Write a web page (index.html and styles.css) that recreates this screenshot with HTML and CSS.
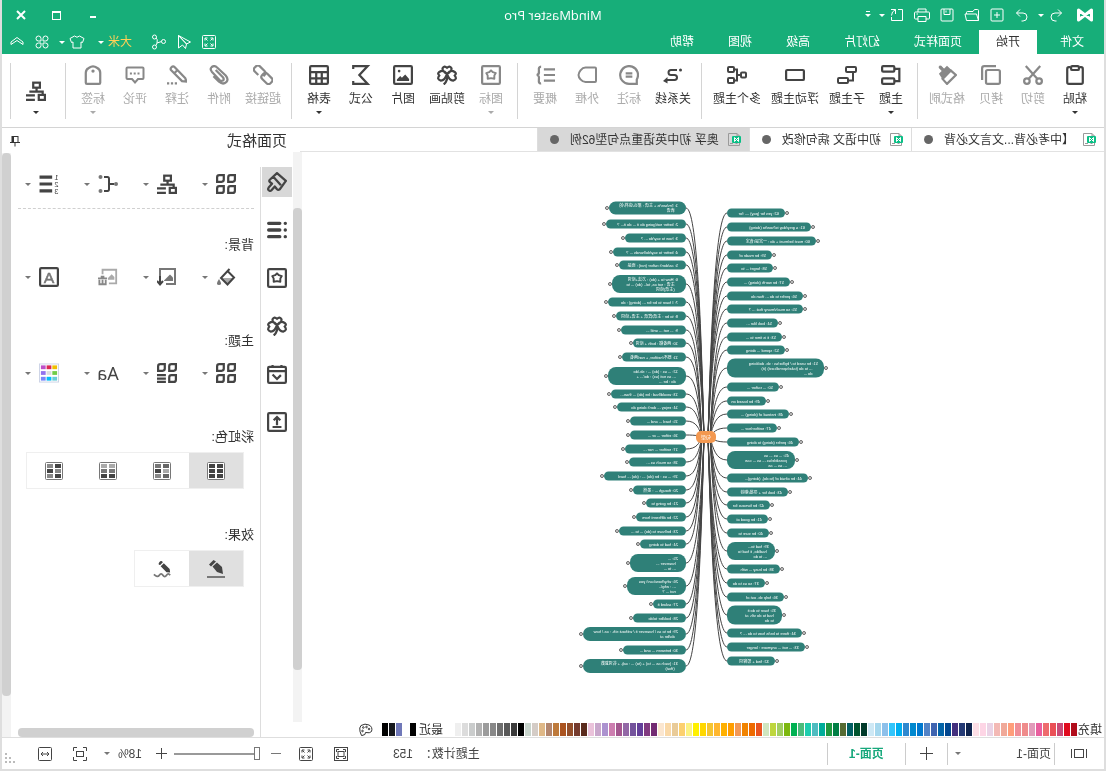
FILE: index.html
```html
<!DOCTYPE html>
<html lang="zh-CN">
<head>
<meta charset="utf-8">
<title>MindMaster Pro</title>
<link rel="stylesheet" href="styles.css">
</head>
<body>
<svg class="sprite" aria-hidden="true">
  <defs>
    <symbol id="logo" viewBox="0 0 18 16"><path stroke-width="3" stroke-linejoin="round" d="M2.500 13V3L15.500 13V3z"/></symbol>
    <symbol id="undo" viewBox="0 0 14 14"><path d="M5 1.500 1.500 5 5 8.500M1.500 5H8a4 4 0 0 1 0 8H6.500"/></symbol>
    <symbol id="redo" viewBox="0 0 14 14"><path d="m9 1.500 3.500 3.500L9 8.500M12.500 5H6a4 4 0 0 0 0 8h1.500"/></symbol>
    <symbol id="newdoc" viewBox="0 0 14 14"><rect x="1" y="1" width="12" height="12" rx="1"/><path d="M7 4v6M4 7h6"/></symbol>
    <symbol id="folder" viewBox="0 0 16 14"><path d="M1.500 12.500V2.500q0-1 1-1h3l1.500 2h5.500q1 0 1 1V6M1.500 12.500l2-6.500h11.500l-1.500 6.500z"/></symbol>
    <symbol id="save" viewBox="0 0 14 14"><rect x="1" y="1" width="12" height="12" rx="1"/><path d="M4 1v5.500h6V1M8 2.500v2"/></symbol>
    <symbol id="print" viewBox="0 0 16 14"><path d="M4 4V1h8v3M4 11H1.500q-1 0-1-1V5q0-1 1-1h13q1 0 1 1v5q0 1-1 1H12M4 8.500h8V13.500H4zM12 6h1.500"/></symbol>
    <symbol id="export" viewBox="0 0 14 14"><path d="M6 1.500H1.500v11h11V9M13 1.500H8.500V6M8.500 1.500q4 2 4 6"/></symbol>
    <symbol id="full" viewBox="0 0 16 16"><rect x="1.500" y="1.500" width="13" height="13" rx="1"/><path d="M4 6.500V4h2.500M9.500 4H12v2.500M12 9.500V12H9.500M6.500 12H4V9.500M4.500 4.500l2 2M11.500 4.500l-2 2M11.500 11.500l-2-2M4.500 11.500l2-2"/></symbol>
    <symbol id="plane" viewBox="0 0 16 16"><path d="M13.500 1.500 1.500 8l4 2 8-8.500v12.500l-4-3-3 3.500-1-4.500 8-8.500"/></symbol>
    <symbol id="share" viewBox="0 0 16 16"><circle cx="3.500" cy="7.500" r="2"/><circle cx="12.500" cy="3" r="2"/><circle cx="12.500" cy="13" r="2"/><path d="M5.500 7.500 10 9l1 2.500M10 9q-1-4 1-5"/></symbol>
    <symbol id="shirt" viewBox="0 0 16 16"><path d="M5.500 2 1 4.500 2.500 8.500 4 8v6h8V8l1.500.5L15 4.500 10.500 2q-2.500 2.500-5 0z"/></symbol>
    <symbol id="apps" viewBox="0 0 16 16"><path d="M7 7V4.500A2.500 2.500 0 1 0 4.500 7zM9 7V4.500A2.500 2.500 0 1 1 11.500 7zM7 9v2.500A2.500 2.500 0 1 1 4.500 9zM9 9v2.500A2.500 2.500 0 1 0 11.500 9z"/></symbol>
    <symbol id="chev" viewBox="0 0 16 16"><path d="m2 8 6-4.500L14 8v2.500L8 6.500l-6 4M2 8v2.500"/></symbol>
    <symbol id="paste" viewBox="0 0 18 18"><path d="M5 2H3.500Q2 2 2 3.500v12Q2 17 3.500 17h11q1.500 0 1.500-1.500v-12Q16 2 14.500 2H13"/><rect x="5.500" y="1" width="7" height="3.500" rx="1"/></symbol>
    <symbol id="cut" viewBox="0 0 18 18"><circle cx="3.500" cy="14.500" r="2.500"/><circle cx="14.500" cy="14.500" r="2.500"/><path d="M5 12.500 15.500 1M13 12.500 2.500 1"/></symbol>
    <symbol id="copy" viewBox="0 0 18 18"><path d="M4.500 1H15q2 0 2 2v10.500"/><rect x="1" y="4.500" width="12.500" height="12.500" rx="1.500"/></symbol>
    <symbol id="brush" viewBox="0 0 18 18"><path fill="currentColor" d="m9 2 6 6-2 3L6 5z"/><path d="m12 5 4-4M5.500 5 13 12.500 9 17 1 9z"/><path stroke-width="3" d="m12 5 3.500-3.500"/></symbol>
    <symbol id="topic" viewBox="0 0 18 18"><rect x="6" y="1" width="11" height="5" rx="1"/><rect x="6" y="12" width="11" height="5" rx="1"/><path d="M6 3.500H1.500v11H6"/></symbol>
    <symbol id="subtopic" viewBox="0 0 20 18"><rect x="1" y="1" width="10" height="5" rx="1"/><rect x="9" y="12" width="10" height="5" rx="1"/><path d="M4 6v8.500h5"/></symbol>
    <symbol id="float" viewBox="0 0 18 18"><rect x="1" y="4.500" width="16" height="9" rx="1"/></symbol>
    <symbol id="multi" viewBox="0 0 20 18"><rect x="1" y="6.500" width="5" height="5" rx="1"/><rect x="13" y="1" width="6" height="5" rx="1"/><rect x="13" y="12" width="6" height="5" rx="1"/><path d="M6 9h4M13 3.500h-3v11h3"/></symbol>
    <symbol id="relation" viewBox="0 0 20 18"><path d="M6 4h6a2.500 2.500 0 0 1 0 5H8.500a2.500 2.500 0 0 0 0 5H17"/><circle cx="2.500" cy="4" r="1.500" fill="currentColor" stroke="none"/><path fill="currentColor" stroke="none" d="m15.500 11 4.500 4-4.500 2.500z"/></symbol>
    <symbol id="callout" viewBox="0 0 18 18"><path d="M2 17v-4A8 8 0 1 1 9 17zM6 7.500h6M6 10.500h6"/></symbol>
    <symbol id="frame" viewBox="0 0 20 18"><path d="M2 1.500h9.500c4 0 7 5 7 7.500s-3 7-7 7H2q-1 0-1-1V2.500q0-1 1-1z"/></symbol>
    <symbol id="summary" viewBox="0 0 18 18"><path d="M0 4h10M0 9h10M0 14h10M12.500 1.500q2.500 0 2 3.500t2 4q-2.500 0-2 4t-2 3.500"/></symbol>
    <symbol id="star" viewBox="0 0 18 18"><rect x="1" y="1" width="16" height="16" rx="1"/><path stroke-width="1.700" stroke-linejoin="round" d="m9 4.800 1.700 1.700 2.600.8-1.300 2.200v2.900l-3-.6-3 .6V9.500L4.700 7.300l2.600-.8z"/></symbol>
    <symbol id="clover" viewBox="0 0 18 18"><path d="M9 8Q4.500 5.500 5 3 6.500 0 9 2.500 11.500 0 13 3q.5 2.500-4 5zM9 8Q6 4.500 3.500 5.500-.5 7 2 9.500-.5 13 3.500 14 7 14 9 8zM9 8q3-3.500 5.500-2.500 4 1.500 1.500 4 2.500 3.500-1.500 4.500Q11 14 9 8zM9 8v5q1 3 3 4.500"/></symbol>
    <symbol id="image" viewBox="0 0 18 18"><rect x="1" y="1" width="16" height="16" rx="1"/><path fill="currentColor" stroke="none" d="M3.500 14.500v-2l3.500-4 3 3 1.500-1.500 3 3v1.500z"/><circle cx="12.500" cy="5.500" r="1.200" fill="currentColor" stroke="none"/></symbol>
    <symbol id="sigma" viewBox="0 0 18 18"><path d="M16 3.500V1H3l7.500 8L3 17h13v-2.500"/></symbol>
    <symbol id="table" viewBox="0 0 18 18"><rect x="1" y="1" width="16" height="16" rx="1"/><path d="M1 6.500h16M1 12h16M6.500 6.500V17M11.500 6.500V17"/></symbol>
    <symbol id="link" viewBox="0 0 18 18"><g transform="rotate(-45 9 9)"><rect x="-1" y="5.500" width="10.500" height="6.500" rx="2.500"/><path d="M8 9.500V8q0-2.500 2.500-2.500h6Q19 5.500 19 8v1.500q0 2.500-2.500 2.500H12"/></g></symbol>
    <symbol id="clip" viewBox="0 0 18 18"><path d="m12 4.500-6.500 6.500q-1.500 2 0 3 1.500.8 3-.5l7-7.500q2-2.500 0-4.200-2.500-1.800-4.800.5L3 9.500Q0 13 2.500 15.500q3 2.500 6.500-.5l5-5"/></symbol>
    <symbol id="note" viewBox="0 0 18 18"><path d="m1.500 12 9.500-10q1.500-1.500 3 0t0 3L4.500 14.500l-4 .5zM8.500 4.500l3 3"/><path stroke-dasharray="2 1.500" d="M9 16.500h9"/></symbol>
    <symbol id="comment" viewBox="0 0 20 18"><path d="M2.500 1.500h15q1 0 1 1V12q0 1-1 1H13l-3 3.500L7 13H2.500q-1 0-1-1V2.500q0-1 1-1z"/><path stroke-dasharray="2 1.800" d="M5.500 7.500h9.800"/></symbol>
    <symbol id="tag" viewBox="0 0 18 18"><path d="M3.500 17q-1 0-1-1V7q0-3 3-4.500Q9 0 12.500 2.500 15.500 4 15.500 7v9q0 1-1 1z"/><circle cx="9" cy="5.500" r="1.500" fill="currentColor" stroke="none"/></symbol>
    <symbol id="layout" viewBox="0 0 18 18"><rect x="5.500" y="1.500" width="6" height="4.500"/><rect x="1" y="12.500" width="5.500" height="4.500"/><path d="M8.500 6v3.500M3 12.500v-3h12M10 13h8M10 17h8"/></symbol>
    <symbol id="doc" viewBox="0 0 14 15"><path stroke="#9a9a9a" d="M4 1.500h8.500v12h-11V4zM4 1.500V4H1.500M8 11.500h3M3.500 11.500h2"/><rect x="0" y="4" width="9" height="7" rx="1" fill="#0bbf86" stroke="none"/><path stroke="#fff" d="M2.500 9.500v-4l4 4v-4z"/></symbol>
    <symbol id="pin" viewBox="0 0 10 12"><path d="M2 1v6M8 1v6M0 7.500h10M2 1.500h6M5 7v4.500"/><path stroke-width="2" d="M7 1v6"/></symbol>
    <symbol id="roller" viewBox="0 0 18 18"><path stroke-linejoin="round" d="M9 1 1 8l5.500 7.500q1.500 1 2.500 0l2-2.500 3 3.500q1.500 1 2.500 0t0-2.500l-3-3.500 2-1.500q1-1 0-2zM12.500 4l-7 8"/></symbol>
    <symbol id="list" viewBox="0 0 18 18"><path stroke-width="3" stroke-linecap="round" d="M6.500 3h10M6.500 9h10M6.500 15h10M1.500 3h.1M1.500 9h.1M1.500 15h.1"/></symbol>
    <symbol id="task" viewBox="0 0 18 18"><rect x="1" y="2.500" width="16" height="14.500" rx="1"/><path d="M1 6.500h16M5 1v2M13 1v2M5.500 10l3.500 3.500 4-4"/></symbol>
    <symbol id="upload" viewBox="0 0 18 18"><rect x="1" y="1" width="16" height="16" rx="1"/><path d="M9 12V5M6 7.500 9 4.500l3 3M5 13.500h8"/></symbol>
    <symbol id="four" viewBox="0 0 18 18"><path d="M1 3q0-2 2-2h4v4q0 2-2 2H1zM11 3q0-2 2-2h4v4q0 2-2 2h-4zM1 13q0-2 2-2h4v4q0 2-2 2H1zM11 13q0-2 2-2h4v4q0 2-2 2h-4z" transform="matrix(-1 0 0 1 18 0)"/></symbol>
    <symbol id="fourlist" viewBox="0 0 18 18"><path d="M1 3q0-2 2-2h4v4q0 2-2 2H1zM11 3q0-2 2-2h4v4q0 2-2 2h-4zM11 13q0-2 2-2h4v4q0 2-2 2h-4z" transform="matrix(-1 0 0 1 18 0)"/><path d="M10 11h8M10 14h8M10 17h8"/></symbol>
    <symbol id="branch" viewBox="0 0 20 18"><path d="M4 9h5M14 2h-3.500q-1.500 0-1.500 2v10q0 2 1.500 2H14"/><g fill="#777" stroke="none"><circle cx="2" cy="9" r="2"/><circle cx="17.500" cy="2" r="2"/><circle cx="17.500" cy="16" r="2"/></g></symbol>
    <symbol id="number" viewBox="0 0 18 19"><path stroke-width="3" d="M6 3h12M6 9.500h12M6 16h12"/><g fill="currentColor" stroke="none" font-family="Liberation Sans, sans-serif" font-size="7"><text x="0" y="6">1</text><text x="0" y="12.500">2</text><text x="0" y="19">3</text></g></symbol>
    <symbol id="bucket" viewBox="0 0 20 18"><path fill="#aaa" stroke="none" d="M3 10h12l-6 6z"/><path d="M8.500 3 2 9.500 8.500 16.500 15 10 6.500 1"/><path fill="#777" stroke="none" d="M17 11q4 6 0 6t0-6z"/></symbol>
    <symbol id="imagedown" viewBox="0 0 20 18"><path stroke="#777" d="M11 16H2V1h15v8"/><path fill="#777" stroke="none" d="M4 13V9.500l3-3 6 6v.5z"/><path d="M17 8v8M14 13l3 3.500 3-3.500"/></symbol>
    <symbol id="imagedel" viewBox="0 0 22 18"><path d="M10 16H2V1h15v5"/><path fill="currentColor" stroke="none" d="M4 12V9l3-3 4 4v2z"/><path stroke="#888" d="M12 10.500h10M15 8.500h4M13.500 12v5h7v-5M17 12v4"/></symbol>
    <symbol id="abox" viewBox="0 0 18 18"><rect x="1" y="1" width="16" height="16" rx="1"/><text x="9" y="14" text-anchor="middle" fill="#777" stroke="#777" stroke-width=".5" font-family="Liberation Sans, sans-serif" font-size="14">A</text></symbol>
    <symbol id="palette" viewBox="0 0 21 20"><g stroke="none"><path fill="#ccd3e6" d="M0 0h21v20H0z"/><path fill="#fff" d="M1 1h19v18H1z"/><path fill="#efbf00" d="M2 2h5v4H2z"/><path fill="#dc2850" d="M8 2h5v4H8z"/><path fill="#bd50c8" d="M14 2h5v4h-5z"/><path fill="#70cc48" d="M2 8h5v4H2z"/><path fill="#ddd" d="M8 8h5v4H8z"/><path fill="#9272ee" d="M14 8h5v4h-5z"/><path fill="#69ced8" d="M2 14h5v4H2z"/><path fill="#04bdf8" d="M8 14h5v4H8z"/><path fill="#7888fa" d="M14 14h5v4h-5z"/></g></symbol>
    <symbol id="pen" viewBox="0 0 18 18"><path fill="currentColor" stroke="none" d="m2 14 1-7 5-4.500 4.500 4L8 12zM9 1.500 11.500 0 16 4.500l-2 2z"/><path stroke="#777" d="M0 17h18"/></symbol>
    <symbol id="sketch" viewBox="0 0 20 18"><path fill="currentColor" stroke="none" d="m1 13 .5-4L8 2.500 11.500 6 5 12.500zM9 1.500q2-3 4 0t-1 3z"/><path stroke="#777" d="M1 16q2-3 4 0t4 0 4 0 6-1"/></symbol>
    <symbol id="colors" viewBox="0 0 14 14"><path d="M11 12.500Q7 12 7.500 9.500 3 10.500 1.500 8.500 0 4 4 2t8 .5q2 2 1 6l-1.500 4z"/><circle cx="4" cy="6" r=".8"/><circle cx="6.500" cy="4" r=".8"/><circle cx="9.700" cy="4.500" r=".8"/><circle cx="10.500" cy="8" r=".8"/></symbol>
    <symbol id="pages" viewBox="0 0 16 12"><rect x="3.500" y="1.500" width="9" height="8"/><path d="M.5 1v9M15.500 1v9"/></symbol>
    <symbol id="fit" viewBox="0 0 16 16"><rect x="1.500" y="1.500" width="13" height="13"/><rect x="5" y="5.500" width="6" height="5"/><path d="M3.500 6V3.500H6M10 3.500h2.500V6M12.500 10v2.500H10M6 12.500H3.500V10"/></symbol>
    <symbol id="focus" viewBox="0 0 16 16"><rect x="4.500" y="5.500" width="7" height="5"/><path d="M1.500 5V1.500H5M11 1.500h3.500V5M14.500 11v3.500H11M5 14.500H1.500V11"/></symbol>
    <symbol id="widthfit" viewBox="0 0 16 16"><rect x="1.500" y="1.500" width="13" height="13" rx="1"/><path d="M4 8h8M6 6 4 8l2 2M10 6l2 2-2 2"/></symbol>
  </defs>
</svg>

<div class="app">
  <header class="top">
    <div class="titlebar">
      <div class="quick">
        <svg class="logo"><use href="#logo"/></svg>
        <button class="q" aria-label="撤销"><svg><use href="#undo"/></svg></button><i class="caret narrow"></i>
        <button class="q" aria-label="重做"><svg><use href="#redo"/></svg></button>
        <button class="q" aria-label="新建"><svg><use href="#newdoc"/></svg></button>
        <button class="q" aria-label="打开"><svg><use href="#folder"/></svg></button>
        <button class="q" aria-label="保存"><svg><use href="#save"/></svg></button>
        <button class="q" aria-label="打印"><svg><use href="#print"/></svg></button>
        <button class="q" aria-label="导出"><svg><use href="#export"/></svg></button>
        <i class="caret"></i><i class="caret barred"></i>
      </div>
      <div class="apptitle">MindMaster Pro</div>
      <div class="window">
        <button aria-label="最小化"><i class="min"></i></button>
        <button aria-label="最大化"><i class="max"></i></button>
        <button aria-label="关闭"><svg viewBox="0 0 8 8"><path d="m0 0 8 8M8 0 0 8"/></svg></button>
      </div>
    </div>
    <div class="menubar">
      <nav class="menus">
        <button class="file">文件</button><button class="on">开始</button><button>页面样式</button><button>幻灯片</button><button>高级</button><button>视图</button><button>帮助</button>
      </nav>
      <div class="tools">
        <button aria-label="全屏"><svg><use href="#full"/></svg></button>
        <button aria-label="发送"><svg><use href="#plane"/></svg></button>
        <button aria-label="分享"><svg><use href="#share"/></svg></button>
        <button class="user">大米<i class="caret"></i></button>
        <button aria-label="皮肤"><svg><use href="#shirt"/></svg><i class="caret"></i></button>
        <button aria-label="应用"><svg><use href="#apps"/></svg></button>
        <button aria-label="收起"><svg><use href="#chev"/></svg></button>
      </div>
    </div>
  </header>

  <section class="ribbon">
    <div class="group">
      <button><svg><use href="#paste"/></svg>粘贴<i class="caret"></i></button>
      <button class="off"><svg><use href="#cut"/></svg>剪切</button>
      <button class="off"><svg><use href="#copy"/></svg>拷贝</button>
      <button class="off"><svg><use href="#brush"/></svg>格式刷</button>
    </div>
    <div class="group">
      <button><svg><use href="#topic"/></svg>主题<i class="caret"></i></button>
      <button><svg><use href="#subtopic"/></svg>子主题</button>
      <button><svg><use href="#float"/></svg>浮动主题</button>
      <button><svg><use href="#multi"/></svg>多个主题</button>
    </div>
    <div class="group">
      <button><svg><use href="#relation"/></svg>关系线</button>
      <button class="off"><svg><use href="#callout"/></svg>标注</button>
      <button class="off"><svg><use href="#frame"/></svg>外框</button>
      <button class="off"><svg><use href="#summary"/></svg>概要</button>
    </div>
    <div class="group">
      <button class="off"><svg><use href="#star"/></svg>图标<i class="caret"></i></button>
      <button><svg><use href="#clover"/></svg>剪贴画</button>
      <button><svg><use href="#image"/></svg>图片</button>
      <button><svg><use href="#sigma"/></svg>公式</button>
      <button><svg><use href="#table"/></svg>表格<i class="caret"></i></button>
    </div>
    <div class="group">
      <button class="off"><svg><use href="#link"/></svg>超链接</button>
      <button class="off"><svg><use href="#clip"/></svg>附件</button>
      <button class="off"><svg><use href="#note"/></svg>注释</button>
      <button class="off"><svg><use href="#comment"/></svg>评论</button>
      <button class="off"><svg><use href="#tag"/></svg>标签<i class="caret"></i></button>
    </div>
    <div class="group last">
      <button class="layout" aria-label="布局"><svg><use href="#layout"/></svg><i class="caret"></i></button>
    </div>
  </section>

  <main class="main">
    <section class="work">
      <nav class="docs">
        <button><svg><use href="#doc"/></svg>【中考必背...文言文必背<i class="dot"></i></button>
        <button><svg><use href="#doc"/></svg>初中语文 病句修改<i class="dot"></i></button>
        <button class="on"><svg><use href="#doc"/></svg>奥孚 初中英语重点句型62例<i class="dot"></i></button>
      </nav>
      <div class="stage">
        <svg class="map" id="map" viewBox="2 152 802 570" role="img" aria-label="思维导图"></svg>
        <div class="vbar"><i></i></div>
      </div>
      <div class="fills">
        <span>填充</span>
        <div class="swatches" id="swatches"></div>
        <span>最近</span>
        <div class="recent" id="recent"></div>
        <svg class="thin"><use href="#colors"/></svg>
      </div>
    </section>

    <aside class="side">
      <div class="sidehead"><h2>页面格式</h2><button aria-label="固定"><svg><use href="#pin"/></svg></button></div>
      <div class="sidebody">
        <nav class="rail">
          <button class="on" aria-label="页面格式"><svg><use href="#roller"/></svg></button>
          <button aria-label="大纲"><svg><use href="#list"/></svg></button>
          <button aria-label="图标"><svg><use href="#star"/></svg></button>
          <button aria-label="剪贴画"><svg><use href="#clover"/></svg></button>
          <button aria-label="任务"><svg><use href="#task"/></svg></button>
          <button aria-label="导出"><svg><use href="#upload"/></svg></button>
        </nav>
        <div class="panel">
          <div class="row first">
            <button aria-label="样式"><svg><use href="#four"/></svg><i class="caret"></i></button>
            <button aria-label="布局"><svg><use href="#layout"/></svg><i class="caret"></i></button>
            <button aria-label="连线"><svg><use href="#branch"/></svg><i class="caret"></i></button>
            <button aria-label="编号"><svg><use href="#number"/></svg><i class="caret"></i></button>
          </div>
          <h3>背景:</h3>
          <div class="row">
            <button aria-label="填充"><svg><use href="#bucket"/></svg><i class="caret"></i></button>
            <button aria-label="插入图片"><svg><use href="#imagedown"/></svg><i class="caret"></i></button>
            <button class="off" aria-label="删除图片"><svg><use href="#imagedel"/></svg></button>
            <button aria-label="水印"><svg><use href="#abox"/></svg><i class="caret"></i></button>
          </div>
          <h3>主题:</h3>
          <div class="row">
            <button aria-label="主题"><svg><use href="#four"/></svg><i class="caret"></i></button>
            <button aria-label="主题样式"><svg><use href="#fourlist"/></svg><i class="caret"></i></button>
            <button aria-label="字体"><span class="aa">Aa</span><i class="caret"></i></button>
            <button aria-label="颜色"><svg><use href="#palette"/></svg><i class="caret"></i></button>
          </div>
          <h3>彩虹色:</h3>
          <div class="seg" id="rainbow"></div>
          <h3 class="effect">效果:</h3>
          <div class="seg">
            <button class="on" aria-label="钢笔"><svg><use href="#pen"/></svg></button>
            <button aria-label="手绘"><svg><use href="#sketch"/></svg></button>
          </div>
          <div class="hbar"><i></i></div>
        </div>
        <div class="vbar panelbar"><i></i></div>
      </div>
    </aside>
  </main>

  <footer class="status">
    <div class="pages">
      <button class="list" aria-label="页面列表"><svg><use href="#pages"/></svg></button>
      <button class="pick">页面-1<i class="caret"></i></button>
      <button class="add" aria-label="添加页面"><i class="plus"></i></button>
      <button class="current">页面-1</button>
    </div>
    <div class="count">主题计数：  153</div>
    <div class="zoom">
      <button class="ic" aria-label="适应"><svg><use href="#fit"/></svg></button>
      <button class="ic" aria-label="全屏"><svg><use href="#full"/></svg></button>
      <button class="step out" aria-label="缩小"><i class="minus"></i></button>
      <input type="range" min="0" max="100" value="0" aria-label="缩放">
      <button class="step" aria-label="放大"><i class="plus small"></i></button>
      <button class="pct">18%<i class="caret"></i></button>
      <button class="ic" aria-label="聚焦"><svg><use href="#focus"/></svg></button>
      <button class="ic" aria-label="适应宽度"><svg><use href="#widthfit"/></svg></button>
      <svg class="grip" viewBox="0 0 12 11"><path d="M9 0h2v2H9zM5 4h2v2H5zM9 4h2v2H9zM1 8h2v2H1zM5 8h2v2H5zM9 8h2v2H9z"/></svg>
    </div>
  </footer>
</div>
<script src="script.js"></script>
</body>
</html>
```
FILE: script.js
```js
// Topics as [centre y, width, height, text lines...]
const left = [
  [213, 58, 9, "62: yes for (pay) .... for"],
  [227, 84, 9, "61: a grey/day is/how/to (doing)"],
  [241, 89, 9, "60: must be/must + do : 一定是/肯定"],
  [255, 45, 9, "59: be made of"],
  [268, 46, 9, "58: forget ... to"],
  [282, 63, 9, "57: be worth (doing) ..."],
  [296, 76, 9, "56: prefer to do ... than do"],
  [309, 76, 9, "55: so much/many that ... ?"],
  [323, 51, 9, "54: look like ..."],
  [337, 55, 9, "53: it is time to ..."],
  [350, 58, 9, "52: spend ... doing"],
  [368, 97, 19, "51: be used to / by/for/as : sb. do/doing", "     ... to do (take/spend/cost) (it)", "     do ..."],
  [387, 52, 9, "50: ... rather ..."],
  [401, 39, 9, "49: be based on"],
  [414, 62, 9, "48: instead of (doing) ..."],
  [428, 50, 9, "47: neither/nor ..."],
  [442, 72, 9, "46: prefer (doing) to doing"],
  [460, 68, 18, "45: ... as ... as", "  possible/as ... as ... can", "  ... as ... as"],
  [478, 81, 9, "44: be afraid of (to do), (doing)..."],
  [492, 61, 9, "43: look for + 寻找/期待"],
  [505, 43, 9, "42: be famous for"],
  [519, 41, 9, "41: be good at"],
  [533, 42, 9, "40: be sure to"],
  [551, 48, 18, "39: had to...", "  had/do, it had to", "  ... to do"],
  [569, 53, 9, "38: be busy ... with"],
  [583, 38, 9, "37: so as to do"],
  [597, 57, 9, "36: help sb. out of"],
  [615, 55, 19, "35: have to do it", "  had to do sth. at", "  to do"],
  [633, 75, 9, "34: there to be/is how to do ... ?"],
  [647, 78, 9, "33: ... not ... anymore : longer"],
  [661, 48, 9, "32: find + 形容词"]
];
const right = [
  [208, 77, 13, "1: I'm/are/is + 主语 : 那么/这样/的", "   表语"],
  [224, 80, 9, "2: better not/going do it ... do it... ?"],
  [238, 61, 9, "3: how to say/do ... ?"],
  [252, 73, 9, "4: better to say/do/hands ... ?"],
  [265, 67, 9, "5: as/don't rather (not) : 而是"],
  [284, 74, 18, "6: How to + (do) : 方法+动词", "   主语 : not as, to/.. (do) ... to", "   (主语)动词"],
  [302, 78, 9, "7: I have to be for ... (doing) : do"],
  [316, 70, 9, "8: to be : 主语/宾语 + 主语+动词"],
  [330, 65, 9, "9: ... not ... until ..."],
  [343, 53, 9, "10: 两者都 : both + 动词"],
  [357, 64, 9, "11: 既不/neither, + nor/两者"],
  [376, 78, 18, "12: ... as : (do) ... : sb./do", "  ... as not (as) : do/... +", "  do : be ..."],
  [394, 75, 9, "13: would/had : be (do) ... than..."],
  [407, 69, 9, "14: enjoy ... don't doing do"],
  [421, 56, 9, "15: hard ... and ..."],
  [435, 56, 9, "16: either ... or ..."],
  [449, 61, 9, "17: neither ... nor ..."],
  [462, 57, 9, "18: so much as ..."],
  [476, 82, 9, "19: ... as : be (do) ... : (do) ... hard"],
  [490, 53, 9, "20: though ... : 虽然"],
  [503, 40, 9, "21: be going to"],
  [517, 50, 9, "22: be different from"],
  [531, 67, 9, "23: be/have to (do) ... to ..."],
  [544, 46, 9, "24: had to doing"],
  [563, 56, 18, "25: ...", "  however ...", "  ... to ..."],
  [586, 59, 18, "26: why/how/can't you", "  ... : why/..", "  not ... ?"],
  [604, 33, 9, "27: asked it"],
  [618, 53, 9, "28: look/be to/do"],
  [634, 103, 14, "29: be to as / however it / without sth. : as / how", "   do/be at"],
  [650, 63, 9, "30: between ... and ..."],
  [666, 103, 14, "31: (such as ... to) + (to) ... : adj. + 名词复数", "   (that)"]
];
const NS = "http://www.w3.org/2000/svg";
const map = document.getElementById("map");
function add(tag, attrs, text) {
  const el = document.createElementNS(NS, tag);
  for (const k in attrs) el.setAttribute(k, attrs[k]);
  if (text) el.textContent = text;
  map.appendChild(el);
}
const root = { x: 400, y: 437 };
function draw(list, side) {
  const edge = side < 0 ? 379 : 420;
  for (const [y, w, h, ...lines] of list) {
    const dy = root.y - y;
    const hub = root.x + side * (Math.abs(dy) > 120 ? 2 : 4);
    add("path", { class: "line", d: `M${edge} ${y}C${edge - side * 11} ${y} ${hub + side * 3} ${y + dy * 0.5} ${hub} ${root.y}` });
    const x = side < 0 ? edge - w : edge;
    add("rect", { class: "topic", x, y: y - h / 2, width: w, height: h, rx: Math.min(h / 2, 8) });
    add("circle", { class: "knob", cx: edge + side * (w + 2), cy: y, r: 1.5 });
    lines.forEach((t, i) => {
      add("text", { class: "label", x: x + (side < 0 ? 6 : 8), y: y + 1.5 + (i - (lines.length - 1) / 2) * 5 }, t);
    });
  }
}
draw(left, -1);
draw(right, 1);
add("rect", { class: "root", x: 390, y: 431, width: 20, height: 12, rx: 5 });
add("text", { class: "rootlabel", x: 400, y: 439 }, "句型");

const fills = "b10c1b e00a1e c94b78 ea5057 ee6b6e e95f9f e19bba ef8b8b f08f98 ff9e7b f0a999 f3b9b5 ead3e6 fdd5e5 fddfe6 10254f 243a75 43307e 02478f 0464a8 3f64b0 5283c6 0078cf 0088cf 2e88cf 00aff0 32c5fb 8dc0ea a6d8ee cde8f5 003a2a 00542f 026064 566b33 007f45 209840 00ad9a 4fbcc0 1ecdae 4bbb7b 00b152 7db80f a2cf62 bed63e d0e6c0 ea5420 ee6a00 f18300 f39855 ff9d00 ffb000 ffb72f f5c532 ffd700 fff000 fcf283 fcd06f e9cb98 fad9a8 fbe6cf 732b73 813a80 64409a 74539c 9368a6 a4578f cd7eb0 ac92cf c9a7cc eac2da 5a2b1d 753b2e 944f2b ab5420 be7a3b b3866e dfb887 d4ccc6 c8d4cc 000000 3a3a3a 585858 6e6e6e 888888 9c9c9c b3b3b3 cacccc dcdcdc efefef".split(" ");
function swatches(id, list) {
  for (const c of list) {
    const b = document.createElement("button");
    b.style.background = "#" + c;
    b.setAttribute("aria-label", "#" + c);
    document.getElementById(id).appendChild(b);
  }
}
swatches("swatches", fills);
swatches("recent", ["000000", "7078b8", "16181c", "000000"]);

// Six tones per rainbow mode, row by row
const modes = [["444", "444", "444", "444", "444", "444"], ["666", "777", "aaa", "444", "666", "888"], ["aaa", "aaa", "777", "777", "444", "444"], ["444", "888", "888", "444", "444", "888"]];
document.getElementById("rainbow").innerHTML = modes.map((m, i) =>
  `<button class="${i ? "" : "on"}" aria-label="彩虹色 ${i + 1}"><svg viewBox="0 0 18 18"><rect x=".5" y=".5" width="17" height="17" rx="1" stroke="#777" stroke-width="1" fill="#fff"/>` +
  m.map((c, k) => `<rect x="${k % 2 ? 10 : 2}" y="${2 + (k >> 1) * 5}" width="6" height="4" fill="#${c}" stroke="none"/>`).join("") + "</svg></button>").join("");
```
FILE: styles.css
```css
* { box-sizing: border-box; }
html, body { height: 100%; }
body { margin: 0; font: 12px/16px "Liberation Sans", "Noto Sans CJK SC", sans-serif; color: #333; background: #fff; }
button { border: 0; padding: 0; margin: 0; background: none; font: inherit; color: inherit; white-space: nowrap; }
svg { fill: none; stroke: currentColor; flex: none; display: block; }
.sprite { position: absolute; width: 0; height: 0; }
/* The whole interface is shown as a mirror image */
.app { transform: scaleX(-1); height: 100vh; display: flex; flex-direction: column; border: solid #dedede; border-width: 0 2px 2px; overflow: hidden; }
.caret { display: inline-block; border: 3px solid transparent; border-top-color: currentColor; border-bottom: 0; flex: none; }

.top { background: #17ae79; color: #fff; margin: 0 -2px; }
.titlebar { height: 30px; display: grid; grid-template-columns: 1fr auto 1fr; align-items: center; }
.quick { display: flex; align-items: center; padding-left: 12px; }
.logo { width: 18px; height: 16px; margin-right: 7px; }
.q { width: 25px; display: flex; justify-content: center; }
.q svg { width: 16px; height: 14px; }
.quick .caret { margin: 0 4px 0 0; }
.quick .caret.narrow { margin: 0 3px 0 0; }
.quick .barred { box-shadow: 0 -4px 0 -1px #fff; margin-left: 4px; }
.apptitle { font: 13px/16px "Open Sans", "Noto Sans", sans-serif; }
.window { display: flex; justify-content: flex-end; padding-right: 3px; }
.window button { width: 36px; height: 28px; display: grid; place-items: center; }
.window svg { width: 8px; height: 8px; stroke-width: 2; overflow: visible; }
.min { width: 6px; height: 2px; background: #fff; margin-top: 4px; }
.max { width: 9px; height: 9px; border: 1px solid #fff; border-top-width: 2px; }
.menubar { height: 24px; display: flex; justify-content: space-between; }
.menus { display: flex; }
.menus button { padding: 0 17px; }
.menus .file { padding: 0 23px 0 22px; }
.menus .on { background: #fff; color: #333; }
.tools { display: flex; align-items: center; gap: 9px; padding-right: 9px; }
.tools button { display: flex; align-items: center; gap: 4px; }
.tools svg { width: 16px; height: 16px; }
.tools .user { color: #ffd057; margin: 0 4px 0 10px; }
.user .caret { color: #fff; }

.ribbon { display: flex; height: 74px; border-bottom: 1px solid #d4d4d4; padding-left: 2px; flex: none; }
.group { display: flex; padding: 0 6px; margin-right: -1px; border-right: 1px solid; border-image: linear-gradient(transparent 10px, #d4d4d4 10px, #d4d4d4 64px, transparent 64px) 1; }
.group button { min-width: 42px; padding: 11px 5px 0; display: flex; flex-direction: column; align-items: center; }
.group svg { width: 20px; height: 20px; margin-bottom: 6px; stroke-width: 2; color: #444; }
.group .caret { margin-top: 4px; }
.group .off { color: #aaa; }
.group .off svg { color: #888; }
.group.last { margin-right: 8px; margin-left: auto; padding-right: 4px; }
.group .layout { padding-top: 27px; }

.main { flex: 1; min-height: 0; display: flex; }
.work { flex: 1; min-width: 0; display: flex; flex-direction: column; }
.docs { display: flex; height: 24px; border-bottom: 1px solid #e2e2e2; margin-right: 7px; }
.docs button { display: flex; align-items: center; padding: 0 12px 0 8px; border-right: 1px solid #ddd; }
.docs svg { width: 14px; height: 15px; margin-right: 8px; }
.docs .on { background: #d8d8d8; }
.dot { width: 9px; height: 9px; border-radius: 50%; background: #666; margin-left: 11px; }
.stage { flex: 1; min-height: 0; display: flex; }
.map { flex: 1; min-width: 0; height: 100%; }
.line { stroke: #444; stroke-width: 1; }
.topic { fill: #2f8078; stroke: none; }
.knob { fill: #ddd; stroke: #444; stroke-width: .8; }
.label { font-size: 4px; fill: #fff; stroke: none; white-space: pre; }
.root { fill: #f39850; stroke: none; }
.rootlabel { font-size: 5px; fill: #fff; stroke: none; text-anchor: middle; }
.vbar { width: 9px; background: #f3f3f3; display: flex; flex-direction: column; flex: none; }
.vbar i { background: #d0d0d0; border-radius: 4px; height: 81%; margin-top: 56px; }
.fills { height: 15px; display: flex; align-items: center; padding-left: 2px; flex: none; }
.swatches, .recent { display: flex; gap: 1px; }
.swatches { margin: 0 12px 0 1px; }
.fills button { width: 6px; height: 13px; }
.recent { margin-left: 3px; }
.recent button:first-child { margin-right: 7px; }
.fills svg { width: 14px; height: 14px; margin-left: 9px; }

.side { width: 291px; display: flex; flex-direction: column; flex: none; }
.sidehead { height: 25px; display: flex; align-items: center; justify-content: space-between; padding: 0 8px 0 6px; }
.sidehead h2 { margin: 0; font-size: 15px; font-weight: 400; line-height: 24px; }
.sidehead svg { width: 10px; height: 12px; }
.sidebody { flex: 1; min-height: 0; display: flex; }
.rail { width: 33px; margin-top: 14px; border-right: 1px solid #ddd; display: flex; flex-direction: column; gap: 18px; padding-left: 1px; }
.rail button { width: 30px; height: 30px; display: grid; place-items: center; }
.rail .on { background: #d8d8d8; }
.rail svg, .row svg { width: 20px; height: 20px; stroke-width: 2; color: #444; }
.panel { flex: 1; min-width: 0; padding: 0 7px 0 6px; display: flex; flex-direction: column; }
.row { display: grid; grid-template-columns: repeat(4, 59px); height: 32px; margin-top: 8px; }
.row.first { height: 41px; margin-top: 15px; padding-bottom: 8px; border-bottom: 1px dashed #d0d0d0; }
.row button { display: flex; align-items: center; padding-left: 18px; gap: 8px; }
.row .caret { color: #777; border-width: 3px 3px 0; }
.row .off svg { color: #aaa; }
.aa { width: 20px; display: flex; justify-content: center; font: 18px/20px "Noto Sans", sans-serif; color: #444; }
.panel h3 { margin: 28px 0 0; font-size: 13px; line-height: 16px; font-weight: 400; }
.row + h3 { margin-top: 40px; }
.row.first + h3 { margin-top: 28px; }
.panel .effect { margin-top: 38px; }
.seg { display: flex; align-self: flex-start; border: 1px solid #efefef; margin: 7px 0 0 10px; }
.seg button { width: 54px; height: 35px; display: grid; place-items: center; color: #444; }
.seg .on { background: #e0e0e0; }
.seg svg { width: 18px; height: 18px; stroke-width: 2; }
.hbar { margin-top: auto; height: 9px; }
.hbar i { display: block; height: 9px; background: #d0d0d0; border-radius: 4px; }
.panelbar i { margin-top: 0; height: 93%; }

.status { height: 32px; border-top: 1px solid #dedede; display: grid; grid-template-columns: 1fr auto 391px; align-items: center; flex: none; color: #444; }
.pages { display: flex; height: 22px; }
.pages button { display: flex; align-items: center; border-right: 1px solid #ccc; }
.pages .list { width: 50px; justify-content: center; }
.pages .list svg { width: 16px; height: 12px; }
.pages .pick { width: 107px; padding: 0 7px 0 3px; justify-content: space-between; }
.pages .add { width: 42px; justify-content: center; }
.pages .current { width: 78px; justify-content: center; color: #17a87c; font-weight: 700; }
.pick .caret, .pct .caret { color: #777; }
.plus { width: 13px; height: 13px; background: linear-gradient(#444, #444) center / 13px 1px no-repeat, linear-gradient(#444, #444) center / 1px 13px no-repeat; }
.plus.small { width: 11px; height: 11px; background-size: 11px 1px, 1px 11px; }
.minus { width: 10px; height: 1px; background: #777; }
.count { white-space: pre; }
.zoom { display: flex; align-items: center; padding-left: 34px; }
.zoom svg { width: 16px; height: 16px; }
.zoom .ic { width: 35px; display: grid; place-items: center; }
.zoom .step { width: 20px; display: grid; place-items: center; }
.zoom .out { margin-left: 3px; }
.zoom input { appearance: none; width: 86px; height: 14px; margin: 0 2px 0 6px; background: linear-gradient(#999, #999) center / 100% 2px no-repeat; }
.zoom input::-webkit-slider-thumb { appearance: none; width: 6px; height: 13px; background: #fff; border: 1px solid #777; }
.pct { display: flex; align-items: center; gap: 8px; margin: 0 6px 0 10px; }
.zoom .grip { width: 12px; height: 11px; margin: 9px 2px 0 auto; fill: #bbb; stroke: none; }
```
